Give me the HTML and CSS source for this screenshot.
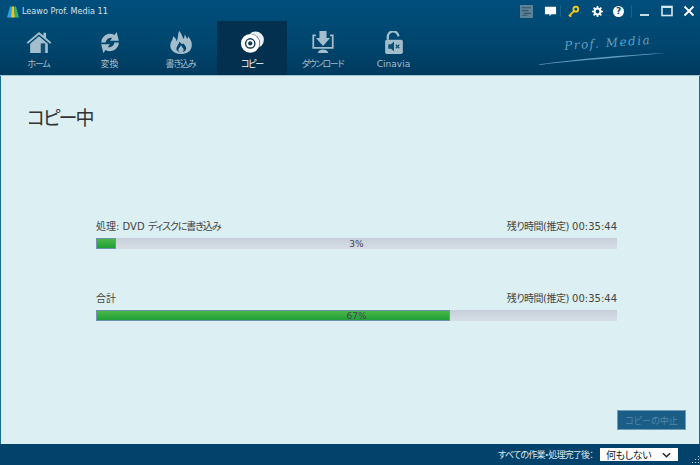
FILE: index.html
```html
<!DOCTYPE html>
<html lang="ja">
<head>
    <meta charset="UTF-8">
    <title>Leawo Prof. Media 11</title>
    <link rel="stylesheet" href="styles.css">
</head>
<body>
    <header class="top">
        <div class="titlebar">
            <svg class="logo" viewBox="0 0 12 12">
                <path d="M0 12 L3 1 H5 L4.500 12Z" fill="#2f9fd8"/>
                <path d="M4 12 L5 1 H7 L8 12Z" fill="#f4c21c"/>
                <path d="M7 1 H9 L12 12 H8Z" fill="#35b06a"/>
            </svg>
            <span class="app-name">Leawo Prof. Media 11</span>
            <div class="tools">
                <svg class="tool gap-thumb" viewBox="0 0 14 14"><rect width="14" height="14" fill="#5d8298"/><path d="M2 3h10M2 6h7M4 9h8M2 11h6" stroke="#33566c" stroke-width="1.200"/></svg>
                <svg class="tool gap-chat" viewBox="0 0 14 14"><path d="M1 2h12v8H8l-2 2v-2H1z" fill="#fff"/></svg>
                <span class="sep"></span>
                <svg class="tool gap-key" viewBox="0 0 14 14"><circle cx="9.500" cy="4.500" r="2.600" fill="none" stroke="#f5c518" stroke-width="2"/><path d="M7.500 6.500 L2 12 M3 11 l1.500 1.500" stroke="#f5c518" stroke-width="2"/></svg>
                <svg class="tool gap-gear" viewBox="0 0 14 14"><circle cx="7" cy="7" r="3.200" fill="none" stroke="#fff" stroke-width="2.200"/><path d="M7 1v2.500M7 10.500V13M1 7h2.500M10.500 7H13M2.800 2.800l1.800 1.800M9.400 9.400l1.800 1.800M11.200 2.800 9.400 4.600M4.600 9.400l-1.800 1.800" stroke="#fff" stroke-width="1.800"/></svg>
                <span class="help">?</span>
                <span class="sep"></span>
                <svg class="win" viewBox="0 0 14 14"><path d="M2 11h9" stroke="#c4dbe8" stroke-width="2"/></svg>
                <svg class="win" viewBox="0 0 14 14"><rect x="2" y="2.500" width="10" height="9" fill="none" stroke="#d6e6ef" stroke-width="1.600"/><path d="M2 3h10" stroke="#d6e6ef" stroke-width="2"/></svg>
                <svg class="win" viewBox="0 0 14 14"><path d="M2.500 2.500l9 9M11.500 2.500l-9 9" stroke="#fff" stroke-width="1.800"/></svg>
            </div>
        </div>
        <div class="navrow">
            <nav class="nav">
                <a class="nav-item">
                    <svg class="nav-icon" viewBox="0 0 28 26"><path d="M0 13 L14 1 L19 5 V2 H22 V8 L28 13 L26.500 14.500 L14 4 L1.500 14.500Z" fill="#a3bdcc"/><path d="M4 14.500 L14 6 L24 14.500 V25 H4Z" fill="#a3bdcc"/><rect x="16" y="14" width="5" height="11" fill="#124f75"/></svg>
                    <span class="nav-label">ホーム</span>
                </a>
                <a class="nav-item">
                    <svg class="nav-icon" viewBox="0 0 28 26"><path d="M4 13 A10 10 0 0 1 19 4.500 L21.500 1 L24 11 L14 11 L16.500 7.800 A6 6 0 0 0 9 13Z" fill="#a3bdcc"/><path d="M24 13 A10 10 0 0 1 9 21.500 L6.500 25 L4 15 L14 15 L11.500 18.200 A6 6 0 0 0 19 13Z" fill="#a3bdcc"/></svg>
                    <span>変換</span>
                </a>
                <a class="nav-item">
                    <svg class="nav-icon" viewBox="0 0 28 26"><path d="M14 26 C6 26 1 21 2 15 C3 11 5 10 5 6 C8 8 9 10 9 12 C11 9 10 4 12 0 C15 3 15 6 17 9 C18 7 18 6 18 4 C20 6 20 8 21 9 C22 8 22 7 22 6 C25 10 27 13 26 18 C25 23 20 26 14 26Z M14 24 C11 24 8 22 9 19 C10 16 12 15 12 12 C14 14 15 16 17 14 C19 17 21 19 19 22 C18 23 16 24 14 24Z" fill="#a3bdcc" fill-rule="evenodd"/><path d="M14 24c-2 0-3-1-3-3 0-1 2-3 3-5 1 2 3 4 3 5 0 2-1 3-3 3z" fill="#a3bdcc"/></svg>
                    <span class="nav-label">書き込み</span>
                </a>
                <a class="nav-item active">
                    <svg class="nav-icon" viewBox="0 0 28 26"><circle cx="18" cy="10" r="9.500" fill="#e8eef2"/><circle cx="12" cy="14" r="11" fill="#04304f"/><circle cx="12" cy="14" r="10.500" fill="#fff"/><circle cx="12" cy="14" r="6" fill="#0d3a57"/><circle cx="12" cy="14" r="4.400" fill="#fff"/><circle cx="12" cy="14" r="2.400" fill="#0d3a57"/></svg>
                    <span class="nav-label">コピー</span>
                </a>
                <a class="nav-item">
                    <svg class="nav-icon" viewBox="0 0 28 26"><path d="M6 4H2v16h24V4h-4v2h2v12H4V6h2z" fill="#a3bdcc"/><path d="M10 0h8v8h4l-8 9-8-9h4z" fill="#a3bdcc"/><path d="M8 25c1-3 3-4 6-4s5 1 6 4z" fill="#a3bdcc"/></svg>
                    <span class="nav-label">ダウンロード</span>
                </a>
                <a class="nav-item">
                    <svg class="nav-icon" viewBox="0 0 28 26"><path d="M7 10V7a6 6 0 0 1 12-1" fill="none" stroke="#a3bdcc" stroke-width="2.600"/><rect x="4" y="10" width="20" height="16" rx="2" fill="#a3bdcc"/><path d="M7.500 15h3l3.500-3v11l-3.500-3h-3z" fill="#124f75"/><path d="M16 15.500l4 4M20 15.500l-4 4" stroke="#124f75" stroke-width="1.400"/></svg>
                    <span>Cinavia</span>
                </a>
            </nav>
            <div class="brand">
                <span class="brand-name">Prof. Media</span>
                <svg class="swoosh" viewBox="0 0 130 14"><path d="M0 13 C40 7 90 3 130 1 C90 5 50 8 0 13Z" fill="#5f9cc0"/></svg>
            </div>
        </div>
    </header>

    <main class="content">
        <h1>コピー中</h1>
        <div class="progress-group">
            <div class="progress-block">
                <div class="progress-label">
                    <span>処理: DVD <span class="jp-tight">ディスクに書き込み</span></span>
                    <span><span class="jp-est">残り時間(推定)</span> 00:35:44</span>
                </div>
                <div class="bar">
                    <div class="bar-fill" style="width: 3.8%"></div>
                    <span class="bar-text">3%</span>
                </div>
            </div>
            <div class="progress-block">
                <div class="progress-label">
                    <span>合計</span>
                    <span><span class="jp-est">残り時間(推定)</span> 00:35:44</span>
                </div>
                <div class="bar">
                    <div class="bar-fill" style="width: 67.9%"></div>
                    <span class="bar-text">67%</span>
                </div>
            </div>
        </div>
        <div class="actions">
            <button class="stop">コピーの中止</button>
        </div>
    </main>

    <footer class="bottom">
        <span class="after">すべての作業・処理完了後：</span>
        <div class="select">
            <span>何もしない</span>
            <svg class="chevron" viewBox="0 0 10 6"><path d="M1 1l4 4 4-4" fill="none" stroke="#222" stroke-width="1.600"/></svg>
        </div>
        <svg class="grip" viewBox="0 0 10 10"><path d="M9 1v1H8V1zM9 4v1H8V4zM6 4v1H5V4zM9 7v1H8V7zM6 7v1H5V7zM3 7v1H2V7z" fill="#b9d0dc"/></svg>
    </footer>
</body>
</html>
```

FILE: styles.css
```css
* {
    box-sizing: border-box;
}
html, body {
    height: 100%;
}
body {
    margin: 0;
    width: 700px;
    height: 465px;
    overflow: hidden;
    display: flex;
    flex-direction: column;
    background: #dceff2;
    font-family: "DejaVu Sans", "Noto Sans CJK JP", sans-serif;
    font-feature-settings: "palt";
    color: #444;
}
.top {
    height: 76px;
    background: linear-gradient(180deg, #004e7c, #00476f 55%, #003a5e);
    border-bottom: 1px solid #9fc4d2;
}
.titlebar {
    height: 21px;
    display: flex;
    align-items: center;
    padding: 1px 4px 0 7px;
}
.logo {
    width: 12px;
    height: 13px;
}
.app-name {
    margin-left: 3px;
    font-family: "DejaVu Sans Condensed", "DejaVu Sans", sans-serif;
    font-stretch: condensed;
    font-size: 9px;
    color: #d5e3ea;
}
.tools {
    margin-left: auto;
    display: flex;
    align-items: center;
}
.tool {
    width: 13px;
    height: 13px;
}
.gap-thumb {
    margin-right: 11px;
}
.gap-chat {
    margin-right: 3px;
}
.gap-key {
    margin-right: 11px;
}
.gap-gear {
    margin-right: 9px;
}
.sep {
    width: 1px;
    height: 12px;
    background: #15628f;
    margin-right: 6px;
}
.help {
    width: 11px;
    height: 11px;
    margin-right: 7px;
    border-radius: 50%;
    background: #fff;
    color: #0a4a70;
    font-size: 9px;
    font-weight: bold;
    line-height: 11px;
    text-align: center;
}
.win {
    width: 14px;
    height: 14px;
    margin-right: 8px;
}
.win:last-child {
    margin-right: 0;
}
.navrow {
    display: flex;
    justify-content: space-between;
    height: 54px;
}
.nav {
    display: flex;
    padding-left: 3px;
}
.nav-item {
    width: 71px;
    display: flex;
    flex-direction: column;
    align-items: center;
    padding-top: 10px;
    font-size: 9px;
    line-height: 13px;
    color: #a3bdcc;
}
.nav-label {
    letter-spacing: -1.2px;
}
.nav-item.active {
    width: 70px;
    margin-left: 1px;
    background: #04304f;
    color: #fff;
}
.nav-icon {
    width: 26px;
    height: 23px;
    margin-bottom: 4px;
}
.brand {
    width: 130px;
    margin-right: 35px;
    display: flex;
    flex-direction: column;
    align-items: flex-end;
    padding-top: 15px;
}
.brand-name {
    margin-right: 14px;
    font-family: "DejaVu Serif", serif;
    font-style: italic;
    font-size: 12px;
    letter-spacing: 1.5px;
    color: #5f9cc0;
    transform: rotate(-4deg);
}
.swoosh {
    width: 130px;
    height: 14px;
    margin-top: 2px;
}
.content {
    flex: 1;
    display: flex;
    flex-direction: column;
    border-left: 1px solid #1d6a94;
    border-right: 1px solid #1d6a94;
    padding: 0 13px 14px 26px;
}
h1 {
    margin: 28px 0 0;
    font-size: 19px;
    line-height: 28px;
    font-weight: normal;
    letter-spacing: -2px;
    color: #333;
}
.progress-group {
    margin: 88px 69px 0 69px;
    display: flex;
    flex-direction: column;
    gap: 43px;
}
.progress-label {
    display: flex;
    justify-content: space-between;
    font-size: 10px;
    line-height: 14px;
    color: #444;
    margin-bottom: 4px;
    white-space: pre;
}
.jp-tight {
    font-size: 10px;
    letter-spacing: -1.1px;
}
.jp-est {
    font-size: 10px;
    letter-spacing: -0.5px;
}
.bar {
    position: relative;
    height: 11px;
    background: linear-gradient(180deg, #c6cfda, #d6dde5);
}
.bar-fill {
    height: 100%;
    background: linear-gradient(180deg, #4cb848, #1f9e36);
    border: 1px solid #6f93ad;
}
.bar-text {
    position: absolute;
    left: 0;
    right: 0;
    top: 0;
    text-align: center;
    font-size: 9px;
    line-height: 12px;
    color: #445;
}
.actions {
    margin-top: auto;
    display: flex;
    justify-content: flex-end;
}
.stop {
    width: 69px;
    height: 20px;
    padding: 0;
    background: #1a5d87;
    border: 1px solid #6f9cb6;
    color: #4f88a8;
    font-family: inherit;
    font-feature-settings: inherit;
    font-size: 9px;
}
.bottom {
    position: relative;
    height: 21px;
    display: flex;
    align-items: center;
    justify-content: flex-end;
    padding: 0 22px 0 0;
    background: #03426b;
    color: #dbe8ef;
    font-size: 9px;
}
.after {
    margin-right: 7px;
    letter-spacing: -0.8px;
}
.select {
    width: 78px;
    height: 13px;
    padding: 0 7px 0 6px;
    display: flex;
    align-items: center;
    justify-content: space-between;
    background: #fff;
    color: #222;
    font-size: 10px;
    letter-spacing: -0.4px;
}
.chevron {
    width: 9px;
    height: 6px;
}
.grip {
    position: absolute;
    right: 0;
    bottom: 0;
    width: 10px;
    height: 10px;
}
```
